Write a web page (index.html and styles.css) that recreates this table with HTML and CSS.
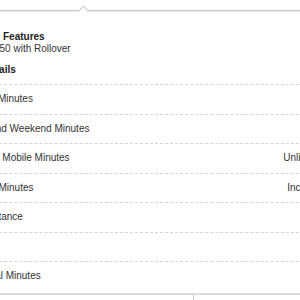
FILE: index.html
```html
<!DOCTYPE html>
<html lang="en">
<head>
<meta charset="utf-8">
<title>Plan details</title>
<link rel="stylesheet" href="styles.css">
</head>
<body>
<div class="page">
  <div class="popup">
    <span class="arrow"></span>
    <div class="summary">
      <h3 class="heading heading-features">Features</h3>
      <ul class="features">
        <li class="feature">450 with Rollover</li>
      </ul>
      <h3 class="heading details">Details</h3>
    </div>
    <div class="rows">
      <div class="row"><span class="label">Anytime Minutes</span><span class="value"></span></div>
      <div class="row"><span class="label">Nights and Weekend Minutes</span><span class="value"></span></div>
      <div class="row"><span class="label">Mobile to Mobile Minutes</span><span class="value">Unlimited</span></div>
      <div class="row"><span class="label">Rollover Minutes</span><span class="value">Included</span></div>
      <div class="row"><span class="label">Long Distance</span><span class="value"></span></div>
      <div class="row"><span class="label"></span><span class="value"></span></div>
      <div class="row"><span class="label">Additional Minutes</span><span class="value"></span></div>
    </div>
    <div class="footer">
      <div class="cell cell-main"><a class="link">Full billing details</a></div>
      <div class="cell cell-side"><a class="link">Add plan &middot; Compare all plans</a></div>
    </div>
  </div>
</div>
</body>
</html>
```
FILE: styles.css
```css
html, body {
  margin: 0;
  padding: 0;
  background: #fff;
}

body {
  font-family: "Liberation Sans", Arial, Helvetica, sans-serif;
  font-size: 10px;
  color: #333;
}

.page {
  width: 300px;
  height: 300px;
  overflow: hidden;
}

.popup {
  position: relative;
  margin: 10px 0 0 -41px;
  width: 380px;
  background: #fff;
  border-top: 1px solid #c9c9c9;
  box-shadow: 0 1px 0 #ececec inset;
}

.arrow {
  position: absolute;
  left: 121px;
  top: -4.5px;
  width: 7px;
  height: 7px;
  box-sizing: border-box;
  background: #fff;
  border-top: 1px solid #c9c9c9;
  border-left: 1px solid #c9c9c9;
  transform: rotate(45deg);
}

.summary {
  padding: 20px 0 8px 24px;
}

.heading {
  margin: 0;
  font-size: 10px;
  font-weight: bold;
  line-height: 12px;
  color: #222;
}

.heading-features {
  padding-left: 20px;
}

.features {
  margin: 0;
  padding: 0 0 0 11px;
  list-style: none;
}

.feature {
  line-height: 12px;
}

.details {
  margin-top: 9px;
}

.rows {
  padding-bottom: 2.5px;
}

.row {
  display: flex;
  align-items: center;
  justify-content: space-between;
  height: 29.5px;
  box-sizing: border-box;
  border-top: 1px dashed #d4d4d4;
  line-height: 12px;
}

.value {
  width: 120px;
  margin-right: 14px;
  text-align: right;
}

.footer {
  display: flex;
  border-top: 2px solid #dcdcdc;
  height: 20px;
}

.cell {
  padding-top: 5px;
  line-height: 12px;
}

.cell-main {
  width: 242px;
  box-sizing: border-box;
  padding-left: 66px;
  border-right: 1px solid #c9c9c9;
}

.cell-side {
  padding-left: 21px;
}

.link {
  color: #2f6db5;
}
```
